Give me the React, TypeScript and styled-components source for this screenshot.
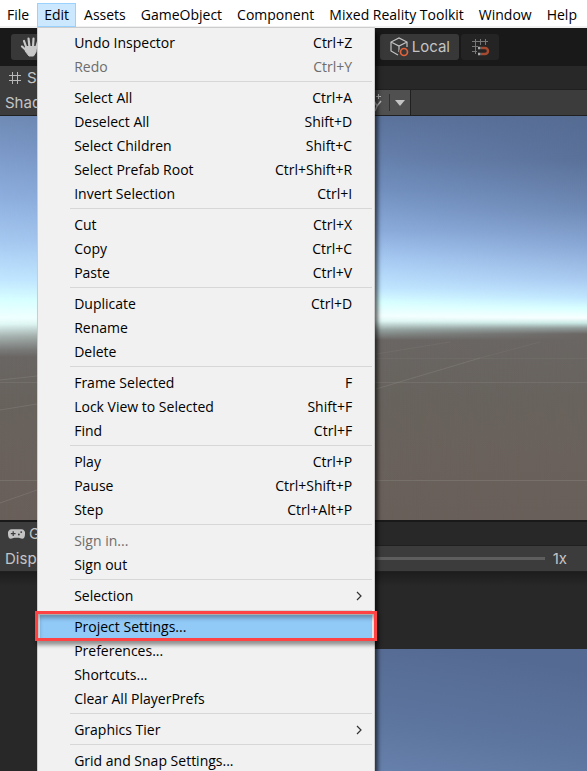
import React from "react";
import styled, { createGlobalStyle, css } from "styled-components";

const GlobalStyle = createGlobalStyle`
  *, *::before, *::after { box-sizing: border-box; }
  body { margin: 0; overflow: hidden; background: #282828; }
  button { font: inherit; color: inherit; border: 0; padding: 0; margin: 0; background: none; text-align: left; }
`;

const Editor = styled.div`
  display: flex;
  flex-direction: column;
  height: 100vh;
  overflow: hidden;
  font-family: Inter, "Liberation Sans", sans-serif;
  font-size: 15px;
  line-height: 20px;
  color: #c4c4c4;
`;

const MenuBar = styled.nav`
  display: flex;
  flex: none;
  gap: 1px;
  height: 28px;
  padding-top: 3px;
  background: #fff;
  border-bottom: 2px solid #f0f0f0;
  font-family: "Open Sans", "Noto Sans", sans-serif;
  font-size: 14px;
  color: #000;
`;

const MenuSlot = styled.div`
  position: relative;
`;

const MenuTitle = styled.button<{ $open?: boolean }>`
  height: 24px;
  padding: 0 6px;
  border: 1px solid transparent;
  white-space: nowrap;
  ${(p) => p.$open && css`
    background: #cce8ff;
    border-color: #99d1ff;
  `}
`;

const DropMenu = styled.div`
  position: absolute;
  z-index: 2;
  top: 24px;
  left: 0;
  width: 338px;
  padding: 3px 2px;
  background: #f1f1f1;
  border: 1px solid #ccc;
  box-shadow: 4px 4px 4px -1px rgba(0, 0, 0, 0.6);
`;

const MenuRow = styled.button<{ $active?: boolean }>`
  position: relative;
  display: flex;
  align-items: center;
  justify-content: space-between;
  width: 100%;
  height: 24px;
  padding: 0 20px 0 34px;
  white-space: nowrap;
  background: ${(p) => (p.$active ? "#91c9f7" : "transparent")};
  &:disabled { color: #6d6d6d; }
`;

const Callout = styled.span`
  position: absolute;
  z-index: 1;
  inset: -4px -5px -2px -5px;
  border: 3px solid #ff4243;
  box-shadow: 1px 4px 4px rgba(0, 0, 0, 0.4), inset 1px 4px 4px rgba(0, 0, 0, 0.3);
  pointer-events: none;
`;

const Arrow = styled.svg`
  width: 7px;
  height: 10px;
  margin-right: -11px;
`;

const Divider = styled.hr`
  height: 1px;
  margin: 2px 0 4px 30px;
  border: 0;
  background: #d7d7d7;
`;

const Toolbar = styled.header`
  display: flex;
  flex: none;
  justify-content: space-between;
  height: 38px;
  padding: 6px 88px 6px 11px;
  background: #191919;
`;

const ToolGroup = styled.div`
  display: flex;
  gap: 2px;
`;

const ToolButton = styled.button<{ $dim?: boolean }>`
  display: flex;
  align-items: center;
  gap: 3px;
  height: 26px;
  padding: 0 9px;
  border-radius: 3px;
  background: ${(p) => (p.$dim ? "#242424" : "#383838")};
`;

const Tabs = styled.div`
  display: flex;
  flex: none;
  height: 24px;
  background: #282828;
  border-bottom: 1px solid #202020;
`;

const GameTabs = styled(Tabs)`
  height: 26px;
  border-top: 2px solid #191919;
`;

const Tab = styled.button`
  display: flex;
  align-items: center;
  gap: 4px;
  height: 24px;
  padding: 0 30px 0 8px;
  background: #3c3c3c;
`;

const ViewBar = styled.div`
  display: flex;
  flex: none;
  align-items: center;
  justify-content: space-between;
  height: 26px;
  background: #3c3c3c;
  border-bottom: 1px solid #202020;
  padding-left: 5px;
`;

const GizmoGroup = styled.div`
  display: flex;
  align-items: center;
  height: 25px;
  margin-right: 176px;
  background: #505050;
  border-right: 1px solid #202020;
`;

const GizmoButton = styled.button<{ $split?: boolean }>`
  display: flex;
  align-items: center;
  height: 17px;
  padding: ${(p) => (p.$split ? "0 5px" : "0 6px")};
  border-left: ${(p) => (p.$split ? "1px solid #303030" : "0")};
`;

const ScaleLabel = styled.label`
  display: flex;
  flex: none;
  align-items: center;
  gap: 8px;
  margin-right: 20px;
`;

const ScaleSlider = styled.input`
  appearance: none;
  width: 200px;
  height: 3px;
  margin: 0;
  background: #5e5e5e;
  &::-webkit-slider-thumb {
    appearance: none;
    width: 10px;
    height: 10px;
    border-radius: 50%;
    background: #999;
  }
`;

const Icon = styled.svg`
  flex: none;
  display: block;
`;

const SceneView = styled.main`
  flex: 404 1 0;
  min-height: 0;
`;

const GameView = styled.section`
  display: grid;
  grid-template-rows: 77fr 122fr;
  flex: 199 1 0;
  min-height: 0;
  background: linear-gradient(#1d1d1d, #282828 14px);
`;

const GameSky = styled.div`
  grid-row: 2;
  margin-left: 40px;
  background: linear-gradient(190deg, #556a92 10%, #5d769f 50%, #6f8bb9 95%);
`;

const Render = styled.svg`
  display: block;
  width: 100%;
  height: 100%;
`;

type Entry = { label: string; keys?: string; disabled?: boolean; sub?: boolean; active?: boolean };

const sections: Entry[][] = [
  [{ label: "Undo Inspector", keys: "Ctrl+Z" }, { label: "Redo", keys: "Ctrl+Y", disabled: true }],
  [
    { label: "Select All", keys: "Ctrl+A" },
    { label: "Deselect All", keys: "Shift+D" },
    { label: "Select Children", keys: "Shift+C" },
    { label: "Select Prefab Root", keys: "Ctrl+Shift+R" },
    { label: "Invert Selection", keys: "Ctrl+I" },
  ],
  [{ label: "Cut", keys: "Ctrl+X" }, { label: "Copy", keys: "Ctrl+C" }, { label: "Paste", keys: "Ctrl+V" }],
  [{ label: "Duplicate", keys: "Ctrl+D" }, { label: "Rename" }, { label: "Delete" }],
  [
    { label: "Frame Selected", keys: "F" },
    { label: "Lock View to Selected", keys: "Shift+F" },
    { label: "Find", keys: "Ctrl+F" },
  ],
  [{ label: "Play", keys: "Ctrl+P" }, { label: "Pause", keys: "Ctrl+Shift+P" }, { label: "Step", keys: "Ctrl+Alt+P" }],
  [{ label: "Sign in...", disabled: true }, { label: "Sign out" }],
  [{ label: "Selection", sub: true }],
  [
    { label: "Project Settings...", active: true },
    { label: "Preferences..." },
    { label: "Shortcuts..." },
    { label: "Clear All PlayerPrefs" },
  ],
  [{ label: "Graphics Tier", sub: true }],
  [{ label: "Grid and Snap Settings..." }],
];

const titles = ["File", "Edit", "Assets", "GameObject", "Component", "Mixed Reality Toolkit", "Window", "Help"];

function EditMenu() {
  return (
    <DropMenu role="menu" aria-label="Edit">
      {sections.map((rows, i) => (
        <React.Fragment key={i}>
          {i > 0 && <Divider />}
          {rows.map((r) => (
            <MenuRow key={r.label} role="menuitem" disabled={r.disabled} $active={r.active}>
              <span>{r.label}</span>
              {r.keys && <span>{r.keys}</span>}
              {r.sub && (
                <Arrow viewBox="0 0 7 10" fill="none" stroke="#333" strokeWidth="1.2">
                  <path d="M1 1l4 4-4 4" />
                </Arrow>
              )}
              {r.active && <Callout />}
            </MenuRow>
          ))}
        </React.Fragment>
      ))}
    </DropMenu>
  );
}

type Stop = [number, string];
const skyLeft: Stop[] = [[0, "#6f8bb5"], [40, "#7d9aca"], [85, "#8fb1e0"], [125, "#a5c8f0"], [163, "#c0e6ff"], [184, "#d8ffff"], [202, "#f0ffff"], [208, "#e0f8f5"], [220, "#a8b5b2"], [233, "#7c7e7c"], [241, "#6a6664"]];
const skyMid: Stop[] = [[0, "#5b739c"], [40, "#6680ac"], [75, "#7391c0"], [115, "#8cacdc"], [145, "#a8ccf4"], [172, "#c0e6ff"], [186, "#d8ffff"], [200, "#f4ffff"], [205, "#e0f8f5"], [214, "#95a3a0"], [224, "#6a6664"]];
const skyRight: Stop[] = [[0, "#556b92"], [44, "#5a7199"], [94, "#6f8ab6"], [130, "#8aa8d5"], [162, "#a8c8ef"], [182, "#c0e6ff"], [192, "#d8ffff"], [202, "#f8ffff"], [207, "#c8e8e4"], [212, "#8f9a98"], [218, "#6a6664"]];

function SkyGradient({ id, stops }: { id: string; stops: Stop[] }) {
  return (
    <linearGradient id={id} x1="0" y1="0" x2="0" y2="404" gradientUnits="userSpaceOnUse">
      {stops.map(([y, c]) => <stop key={y} offset={y / 404} stopColor={c} />)}
      <stop offset="0.7" stopColor="#68635d" />
      <stop offset="0.85" stopColor="#6a615c" />
      <stop offset="1" stopColor="#695f5a" />
    </linearGradient>
  );
}

function SceneRender() {
  return (
    <Render viewBox="0 0 587 404" preserveAspectRatio="none" role="img" aria-label="Scene">
      <defs>
        <SkyGradient id="sky-left" stops={skyLeft} />
        <SkyGradient id="sky-mid" stops={skyMid} />
        <SkyGradient id="sky-right" stops={skyRight} />
        <linearGradient id="fade-a"><stop offset="0" stopColor="#000" /><stop offset="0.64" stopColor="#fff" /></linearGradient>
        <linearGradient id="fade-b"><stop offset="0.64" stopColor="#000" /><stop offset="1" stopColor="#fff" /></linearGradient>
        <mask id="mask-a" style={{ maskType: "luminance" }}><rect width="587" height="404" fill="url(#fade-a)" /></mask>
        <mask id="mask-b" style={{ maskType: "luminance" }}><rect width="587" height="404" fill="url(#fade-b)" /></mask>
      </defs>
      <rect width="587" height="404" fill="url(#sky-left)" />
      <rect width="587" height="404" fill="url(#sky-mid)" mask="url(#mask-a)" />
      <rect width="587" height="404" fill="url(#sky-right)" mask="url(#mask-b)" />
      <g stroke="#8a8783" strokeOpacity="0.4" fill="none">
        <path d="M0 364.500H587" />
        <path d="M0 266.500H587" strokeOpacity="0.3" />
        <path d="M376 242.500H587" strokeOpacity="0.15" />
        <path d="M0 294L37 288M0 264L37 260M0 387L37 374" />
        <path d="M376 273L480 242" />
        <path d="M480 242L540 226M376 238L450 226" strokeOpacity="0.2" />
      </g>
    </Render>
  );
}

export default function App() {
  return (
    <>
      <GlobalStyle />
      <Editor>
        <MenuBar>
          {titles.map((t) => (
            <MenuSlot key={t}>
              <MenuTitle $open={t === "Edit"}>{t}</MenuTitle>
              {t === "Edit" && <EditMenu />}
            </MenuSlot>
          ))}
        </MenuBar>
        <Toolbar>
          <ToolButton aria-label="Hand tool">
            <Icon width="22" height="20" viewBox="0 0 22 20" fill="none" stroke="#c8c8c8" strokeLinecap="round">
              <path d="M6.500 11L4 4M9.500 10L8.500 1.500M13 10L13.500 1.500M16 11L18 4.500M7 14L2 9.500" strokeWidth="2.200" />
              <path d="M6 9.500l10.500 0L16 15l-2.500 4H9l-3.500-4.500z" fill="#c8c8c8" strokeWidth="1" />
            </Icon>
          </ToolButton>
          <ToolGroup>
            <ToolButton>
              <Icon width="20" height="20" viewBox="0 0 20 20" fill="none" stroke="#c4c4c4" strokeWidth="1.200">
                <path d="M9 18L2 14V5l8-4 8 4v5M2 5l8 4 8-4M10 9v6" />
                <circle cx="15" cy="15" r="5" fill="#383838" stroke="none" />
                <circle cx="15" cy="15" r="3.500" stroke="#e2623a" strokeWidth="1.700" />
              </Icon>
              Local
            </ToolButton>
            <ToolButton $dim aria-label="Grid snapping">
              <Icon width="20" height="20" viewBox="1 0 20 20" fill="none">
                <path d="M6.500 2v15M11.500 2v6M16.500 2v6M3 4.500h16M3 9.500h6M3 14.500h5" stroke="#777" />
                <path d="M12 11h4a3 3 0 0 1 0 6h-4" stroke="#a5492f" strokeWidth="2.500" />
                <path d="M9 11h2.500M9 17h2.500" stroke="#aaa" strokeWidth="2.500" />
              </Icon>
            </ToolButton>
          </ToolGroup>
        </Toolbar>
        <Tabs>
          <Tab>
            <Icon width="15" height="14" viewBox="0 0 15 14" fill="none" stroke="#b8b8b8">
              <path d="M4.500 1v12M9.500 1v12M1 4.500h12M1 9.500h12" />
            </Icon>
            Scene
          </Tab>
        </Tabs>
        <ViewBar>
          <button>Shaded</button>
          <GizmoGroup>
            <GizmoButton aria-label="Gizmos">
              <Icon width="14" height="18" viewBox="0 0 14 18" fill="none" stroke="#bbb">
                <path d="M9.500 0v5M7 2.500h5" />
                <path d="M5 7l3 5 4-5M8 12l-2 5" strokeWidth="1.500" />
              </Icon>
            </GizmoButton>
            <GizmoButton $split aria-label="Gizmo options">
              <Icon width="10" height="6" viewBox="0 0 10 6"><path d="M0 0h10L5 6z" fill="#c4c4c4" /></Icon>
            </GizmoButton>
          </GizmoGroup>
        </ViewBar>
        <SceneView><SceneRender /></SceneView>
        <GameTabs>
          <Tab>
            <Icon width="17" height="12" viewBox="0 0 18 12">
              <path d="M4 1h10a4 4 0 0 1 4 5c0 3-1 5-3 5-1.500 0-2.500-1-3.500-1h-5c-1 0-2 1-3.500 1-2 0-3-2-3-5a4 4 0 0 1 4-5z" fill="#c4c4c4" />
              <path d="M3 5.500h5M5.500 3v5" stroke="#3c3c3c" strokeWidth="1.300" />
              <circle cx="11.500" cy="6.500" r="1" fill="#3c3c3c" /><circle cx="14" cy="4" r="1" fill="#3c3c3c" />
            </Icon>
            Game
          </Tab>
        </GameTabs>
        <ViewBar>
          <button>Display 1</button>
          <ScaleLabel>
            <ScaleSlider type="range" aria-label="Scale" min="1" max="5" defaultValue="1" />
            1x
          </ScaleLabel>
        </ViewBar>
        <GameView><GameSky /></GameView>
      </Editor>
    </>
  );
}
